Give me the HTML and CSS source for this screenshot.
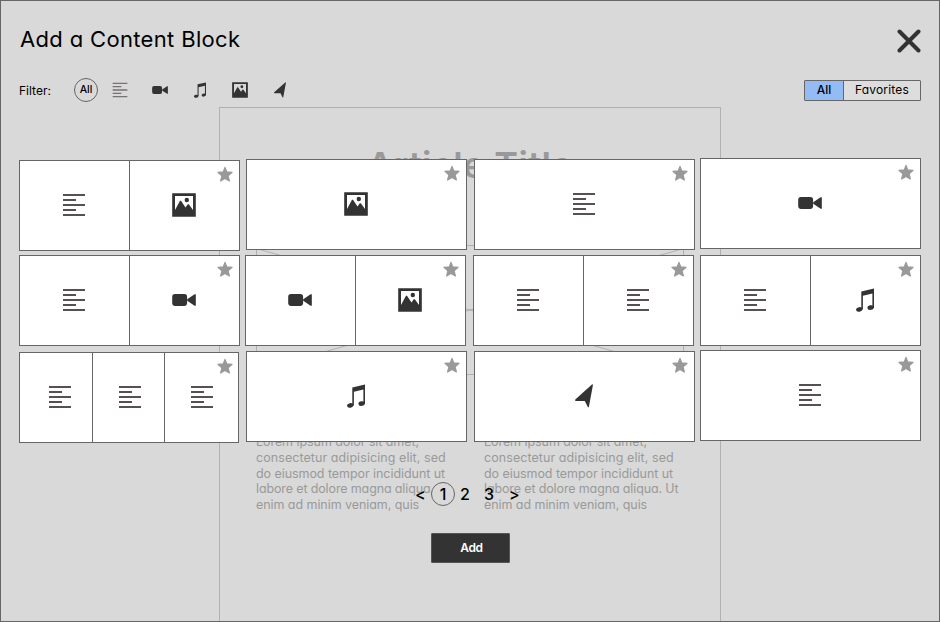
FILE: index.html
```html
<!DOCTYPE html>
<html lang="en">
<head>
<meta charset="utf-8">
<title>Add a Content Block</title>
<link rel="stylesheet" href="styles.css">
</head>
<body>
<svg class="defs" aria-hidden="true">
  <symbol id="text" viewBox="0 0 24 24"><path fill="#575051" d="M1 1h22v2H1zM1 6h13v2H1zM1 11h22v2H1zM1 16h13v2H1zM1 21h22v2H1z"/></symbol>
  <symbol id="image" viewBox="0 0 24 24"><path fill-rule="evenodd" d="M.2.2h23.6v23.6H.2zM3 3v14l5-9.2h1l4.5 6.7 2.3-3.2h1L21 17V3z"/><circle cx="14.8" cy="7" r="2.2"/></symbol>
  <symbol id="video" viewBox="0 0 24 24"><rect x=".2" y="6.1" width="14.9" height="11.8" rx="2.8"/><path d="M15.2 11.2 22.6 6.3H23.8V17.7H22.6L15.2 12.8z"/></symbol>
  <symbol id="music" viewBox="0 0 24 24"><path d="M8.3 3.4 21 .6V20H19.4V5.6L9.9 7.8V21.5H8.3z"/><ellipse cx="6.2" cy="21.4" rx="3.2" ry="2.3" transform="rotate(-12 6.2 21.4)"/><ellipse cx="17.6" cy="19.6" rx="3.2" ry="2.3" transform="rotate(-12 17.6 19.6)"/></symbol>
  <symbol id="nav" viewBox="0 0 24 24"><path d="M20.2.3Q21 .3 20.9 1.2L16.9 22.8Q16.3 24 15.7 22.8L12.8 17H3.6Q2.6 16.4 3.3 15.5z"/></symbol>
  <symbol id="star" viewBox="0 0 16 16"><path stroke="#999" stroke-width="1.2" stroke-linejoin="round" d="M8 1.4 9.8 5.9 15.1 6.3 11.1 9.8 12.4 15 8 12.4 3.6 15 4.9 9.8.9 6.3 6.2 5.9z"/></symbol>
</svg>

<main class="screen">
  <article class="article">
    <h2 class="article-title">Article Title</h2>
    <svg class="placeholder" viewBox="0 0 428 130"><path d="M.5.5h427v129H.5zM.5 3.5l427 123M427.5 3.5.5 126.5"/></svg>
    <div class="columns">
      <p>Lorem ipsum dolor sit amet,<br><span class="loose">consectetur adipisicing elit, sed</span><br>do eiusmod tempor incididunt ut<br><span class="tight">labore et dolore magna aliqua. Ut</span><br>enim ad minim veniam, quis</p>
      <p>Lorem ipsum dolor sit amet,<br><span class="loose">consectetur adipisicing elit, sed</span><br>do eiusmod tempor incididunt ut<br><span class="tight">labore et dolore magna aliqua. Ut</span><br>enim ad minim veniam, quis</p>
    </div>
  </article>

  <section class="dialog">
    <header class="head">
      <h1>Add a Content Block</h1>
      <svg class="close" viewBox="0 0 24 24"><path d="M2.5 2.5l19 19M21.5 2.5l-19 19"/></svg>
    </header>

    <div class="toolbar">
      <span class="label">Filter:</span>
      <span class="all">All</span>
      <div class="filters">
        <svg class="small dim"><use href="#text"/></svg>
        <svg class="small"><use href="#video"/></svg>
        <svg class="small"><use href="#music"/></svg>
        <svg class="small"><use href="#image"/></svg>
        <svg class="small"><use href="#nav"/></svg>
      </div>
      <div class="segmented"><span class="on">All</span><span class="fav">Favorites</span></div>
    </div>

    <div class="blocks">
      <div class="row first">
        <div class="card two"><div class="cell"><svg class="icon"><use href="#text"/></svg></div><div class="cell"><svg class="icon"><use href="#image"/></svg></div><svg class="star"><use href="#star"/></svg></div>
        <div class="card"><div class="cell"><svg class="icon"><use href="#image"/></svg></div><svg class="star"><use href="#star"/></svg></div>
        <div class="card"><div class="cell"><svg class="icon"><use href="#text"/></svg></div><svg class="star"><use href="#star"/></svg></div>
        <div class="card"><div class="cell"><svg class="icon"><use href="#video"/></svg></div><svg class="star"><use href="#star"/></svg></div>
      </div>
      <div class="row second">
        <div class="card two"><div class="cell"><svg class="icon"><use href="#text"/></svg></div><div class="cell"><svg class="icon"><use href="#video"/></svg></div><svg class="star"><use href="#star"/></svg></div>
        <div class="card two"><div class="cell"><svg class="icon"><use href="#video"/></svg></div><div class="cell"><svg class="icon"><use href="#image"/></svg></div><svg class="star"><use href="#star"/></svg></div>
        <div class="card two"><div class="cell"><svg class="icon"><use href="#text"/></svg></div><div class="cell"><svg class="icon"><use href="#text"/></svg></div><svg class="star"><use href="#star"/></svg></div>
        <div class="card two"><div class="cell"><svg class="icon"><use href="#text"/></svg></div><div class="cell"><svg class="icon"><use href="#music"/></svg></div><svg class="star"><use href="#star"/></svg></div>
      </div>
      <div class="row third">
        <div class="card three"><div class="cell"><svg class="icon"><use href="#text"/></svg></div><div class="cell"><svg class="icon"><use href="#text"/></svg></div><div class="cell"><svg class="icon"><use href="#text"/></svg></div><svg class="star"><use href="#star"/></svg></div>
        <div class="card"><div class="cell"><svg class="icon"><use href="#music"/></svg></div><svg class="star"><use href="#star"/></svg></div>
        <div class="card"><div class="cell"><svg class="icon"><use href="#nav"/></svg></div><svg class="star"><use href="#star"/></svg></div>
        <div class="card"><div class="cell"><svg class="icon"><use href="#text"/></svg></div><svg class="star"><use href="#star"/></svg></div>
      </div>
    </div>

    <nav class="pager"><span class="prev">&lt;</span><span class="current">1</span><span class="page">2</span><span class="page">3</span><span class="next">&gt;</span></nav>
    <button class="add">Add</button>
  </section>
</main>
</body>
</html>
```
FILE: styles.css
```css
* { box-sizing: border-box; }
body {
  margin: 0;
  font-family: Inter, "Liberation Sans", sans-serif;
  font-feature-settings: "cv11";
  color: #000;
}
svg { display: block; flex: none; }
h1, h2, p { margin: 0; font-weight: 400; }
.defs { position: absolute; width: 0; height: 0; }

.screen {
  position: relative;
  width: 940px;
  height: 622px;
  overflow: hidden;
  border: 1px solid #666;
  background: #d9d9d9;
}

/* Dimmed page behind the dialog */
.article {
  width: 502px;
  height: 520px;
  margin: 106px 0 0 218px;
  padding: 33px 36px 0;
  border: 1px solid #b0b0b0;
  color: #999;
}
.article-title {
  height: 104px;
  text-align: center;
  font-size: 36px;
  line-height: 48px;
  font-weight: 600;
  letter-spacing: .4px;
}
.placeholder { width: 428px; height: 130px; fill: none; stroke: #b0b0b0; }
.columns {
  display: flex;
  margin-top: 59px;
  font-size: 12.5px;
  line-height: 15.75px;
  letter-spacing: -.06px;
  white-space: nowrap;
}
.columns p { width: 228px; flex: none; }
.loose { letter-spacing: .07px; }
.tight { letter-spacing: -.13px; }

.dialog {
  position: absolute;
  inset: 0;
  display: flex;
  flex-direction: column;
}
.head {
  display: flex;
  justify-content: space-between;
  height: 76px;
  padding: 24px 18px 0 19px;
}
h1 { font-size: 22px; line-height: 28px; letter-spacing: .34px; }
.close {
  width: 24px;
  height: 24px;
  margin-top: 4px;
  stroke: #333;
  stroke-width: 4;
  stroke-linecap: round;
}

.toolbar {
  display: flex;
  align-items: center;
  height: 26px;
  padding: 0 18px;
  font-size: 12px;
}
.label { width: 55px; }
.all {
  width: 24px;
  height: 24px;
  border: 1px solid #666;
  border-radius: 50%;
  font-size: 10.5px;
  font-weight: 500;
  line-height: 22px;
  text-align: center;
}
.filters { display: flex; gap: 24px; margin-left: 14px; fill: #333; }
.small { width: 16px; height: 16px; }
.dim { opacity: .75; }
.segmented {
  display: flex;
  width: 117px;
  height: 21px;
  margin-left: auto;
  border: 1px solid #666;
  border-radius: 1px;
  background: #ddd;
  line-height: 17px;
  text-align: center;
}
.on { width: 39px; border-right: 1px solid #666; background: #94bcf4; font-weight: 500; }
.fav { flex: 1; letter-spacing: .15px; }

.blocks { margin-top: 55px; padding-left: 18px; }
.row { display: flex; align-items: flex-start; height: 95px; }
.card {
  position: relative;
  display: flex;
  flex: none;
  width: 221px;
  height: 91px;
  border: 1px solid #666;
  background: #fff;
  fill: #333;
}
.cell { padding: 32px 0 0 97px; }
.two .cell { width: 110px; padding-left: 42px; }
.two .cell:first-child { border-right: 1px solid #666; }
.two .cell:nth-child(2) { width: 109px; }
.three { width: 220px; }
.three .cell { width: 73px; padding-left: 25px; }
.three .cell:first-child { padding-left: 28px; border-right: 1px solid #666; }
.three .cell:nth-child(2) { width: 72px; border-right: 1px solid #666; }
.icon { width: 24px; height: 24px; }
.star { position: absolute; top: 5px; right: 6px; width: 16px; height: 16px; fill: #999; }
.three .star { right: 5px; }

.first { height: 97px; }
.first .card:nth-child(1), .third .card:nth-child(1) { margin-top: 2px; }
.first .card:nth-child(2), .first .card:nth-child(3),
.third .card:nth-child(2), .third .card:nth-child(3) { margin-top: 1px; }
.card:nth-child(2) { margin-left: 6px; }
.card:nth-child(3) { margin-left: 7px; }
.card:nth-child(4) { margin-left: 5px; }
.second .card:nth-child(2) { margin-left: 5px; }
.second .card:nth-child(4) { margin-left: 6px; }
.third .card:nth-child(2) { margin-left: 7px; }

.pager {
  display: flex;
  align-items: center;
  height: 25px;
  margin: 36px 0 0 414px;
  font-size: 16px;
  font-weight: 500;
}
.prev { width: 16px; }
.current {
  width: 24px;
  height: 24px;
  border: 1px solid #666;
  border-radius: 50%;
  background: #d9d9d9;
  line-height: 22px;
  text-align: center;
}
.page { width: 24px; padding-left: 5px; }
.next { padding-left: 6px; }

.add {
  width: 79px;
  height: 30px;
  margin: 27px 0 0 430px;
  padding: 0 0 2px 2px;
  border: 1px solid #555;
  border-radius: 1px;
  background: #333;
  color: #fff;
  font: inherit;
  font-size: 12px;
  font-weight: 600;
  letter-spacing: -.3px;
}
```
